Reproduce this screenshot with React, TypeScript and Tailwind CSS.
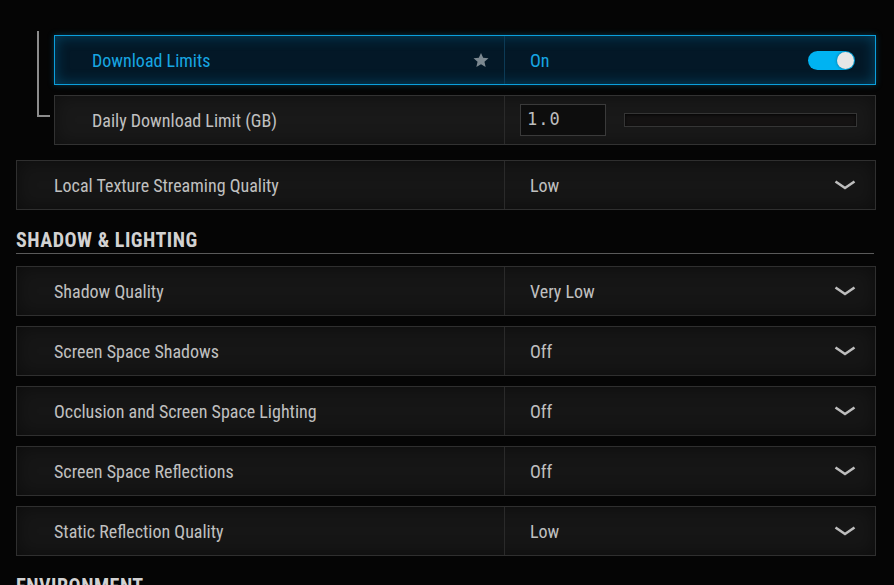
import React from "react";

const font = "font-['Roboto_Condensed','Roboto',sans-serif]";

function Chevron() {
  return (
    <svg width="22" height="10" viewBox="0 0 22 10" className="shrink-0">
      <path d="M1.5 1.5 L11 8 L20.5 1.5" fill="none" stroke="#bdbdbd" strokeWidth="2.6" strokeLinejoin="miter" />
    </svg>
  );
}

function Star() {
  return (
    <svg width="18" height="18" viewBox="0 0 24 24" className="shrink-0">
      <path
        d="M12 2.5l2.9 6.6 7.1.6-5.4 4.7 1.6 7-6.2-3.7-6.2 3.7 1.6-7L2 9.7l7.1-.6z"
        fill="#7c8890"
      />
    </svg>
  );
}

function SelectRow({ label, value }: { label: string; value: string }) {
  return (
    <div className="flex h-[50px] border border-[#2f2f2f] bg-[#161616] shadow-[inset_0_0_18px_rgba(0,0,0,0.45)]">
      <div className={`flex flex-1 items-center pl-[37px] text-[18px] text-[#c0c0c0] ${font}`}>
        {label}
      </div>
      <div className="flex w-[371px] items-center justify-between border-l border-[#2a2a2a] pl-[25px] pr-[19px]">
        <span className={`text-[18px] text-[#c0c0c0] ${font}`}>{value}</span>
        <Chevron />
      </div>
    </div>
  );
}

function Heading({ children }: { children: React.ReactNode }) {
  return (
    <div className="mt-[20px] mr-[2px] border-b border-[#5a5a5a] pb-[2px]">
      <h2 className={`text-[20px] font-bold uppercase leading-[21px] tracking-[0.5px] text-[#d2d2d2] ${font}`}>
        {children}
      </h2>
    </div>
  );
}

export default function App() {
  const shadowRows = [
    { label: "Shadow Quality", value: "Very Low" },
    { label: "Screen Space Shadows", value: "Off" },
    { label: "Occlusion and Screen Space Lighting", value: "Off" },
    { label: "Screen Space Reflections", value: "Off" },
    { label: "Static Reflection Quality", value: "Low" },
  ];

  return (
    <div className="h-[585px] w-full overflow-hidden bg-[#050505] pl-4 pr-[18px] pt-[35px]">
      {/* Download limits group with bracket */}
      <div className="flex items-start">
        <div className="-mt-[4px] ml-[21px] mr-[4px] h-[86px] w-[13px] border-b-2 border-l-2 border-[#8c8c8c]" />
        <div className="flex flex-1 flex-col gap-[10px]">
          <div className="flex h-[50px] border border-[#0b9fdc] bg-[#031827] shadow-[inset_0_0_14px_rgba(10,150,210,0.35),0_0_6px_rgba(10,150,210,0.35)]">
            <div className="flex flex-1 items-center justify-between pl-[37px] pr-[14px]">
              <span className={`text-[18px] text-[#17a6e2] ${font}`}>Download Limits</span>
              <Star />
            </div>
            <div className="flex w-[371px] items-center justify-between border-l border-[#0c3a55] pl-[25px] pr-[20px]">
              <span className={`text-[18px] text-[#17a6e2] ${font}`}>On</span>
              <div className="flex h-[19px] w-[47px] items-center justify-end rounded-full bg-[#00b3f2] pr-[1px]">
                <div className="h-[17px] w-[17px] rounded-full bg-[#e6e6e6] shadow-[0_0_3px_rgba(0,0,0,0.4)]" />
              </div>
            </div>
          </div>
          <div className="flex h-[50px] border border-[#323232] bg-[#191919] shadow-[inset_0_0_18px_rgba(0,0,0,0.4)]">
            <div className={`flex flex-1 items-center pl-[37px] text-[18px] text-[#c0c0c0] ${font}`}>
              Daily Download Limit (GB)
            </div>
            <div className="flex w-[371px] items-center border-l border-[#2a2a2a] pl-[15px] pr-[18px]">
              <div className="flex h-[32px] w-[86px] items-center border border-[#3a3a3a] bg-[#0d0d0d] pl-[6px] font-['DejaVu_Sans_Mono',monospace] text-[17px] tracking-[1px] text-[#bdbdbd]">
                1.0
              </div>
              <div className="ml-[18px] h-[14px] flex-1 border border-[#353535] bg-[#141212] shadow-[inset_0_1px_3px_rgba(0,0,0,0.8)]" />
            </div>
          </div>
        </div>
      </div>

      <div className="mt-[15px]">
        <SelectRow label="Local Texture Streaming Quality" value="Low" />
      </div>

      <Heading>Shadow &amp; Lighting</Heading>

      <div className="mt-[12px] flex flex-col gap-[10px]">
        {shadowRows.map((r) => (
          <SelectRow key={r.label} label={r.label} value={r.value} />
        ))}
      </div>

      <Heading>Environment</Heading>
    </div>
  );
}
